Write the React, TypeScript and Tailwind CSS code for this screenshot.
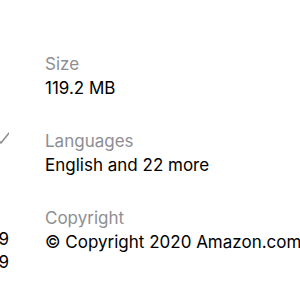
const rows = [
  { label: "Size", value: "119.2 MB" },
  { label: "Languages", value: "English and 22 more" },
  { label: "Copyright", value: "© Copyright 2020 Amazon.com" },
];

export default function App() {
  return (
    <div
      className="flex h-[300px] w-[300px] overflow-hidden bg-white"
      style={{ fontFamily: "Inter, 'Liberation Sans', sans-serif" }}
    >
      {/* clipped column from the neighbouring pane */}
      <div className="flex w-[9px] shrink-0 flex-col items-end overflow-hidden">
        <div className="flex h-[128px] w-full shrink-0" />
        <div className="flex h-[20px] w-[60px] shrink-0 items-center justify-end">
          <svg width="14" height="12" viewBox="0 0 14 12" className="-mr-[1px]">
            <path d="M1 7l4 4 8-10" fill="none" stroke="#8e8e93" strokeWidth="1.6" strokeLinecap="round" strokeLinejoin="round" />
          </svg>
        </div>
        <div className="h-[80px] shrink-0" />
        <div className="flex w-[60px] flex-col items-end text-[17px] leading-[23px] text-black">
          <span>2019</span>
          <span>2019</span>
        </div>
      </div>

      <div className="flex flex-col pl-[36px] pt-[52px]">
        {rows.map((r) => (
          <div key={r.label} className="mb-[29px] flex flex-col whitespace-nowrap">
            <span className="text-[17px] leading-[24px] text-[#8e8e93]">{r.label}</span>
            <span className="text-[17px] leading-[24px] text-black">{r.value}</span>
          </div>
        ))}
      </div>
    </div>
  );
}
